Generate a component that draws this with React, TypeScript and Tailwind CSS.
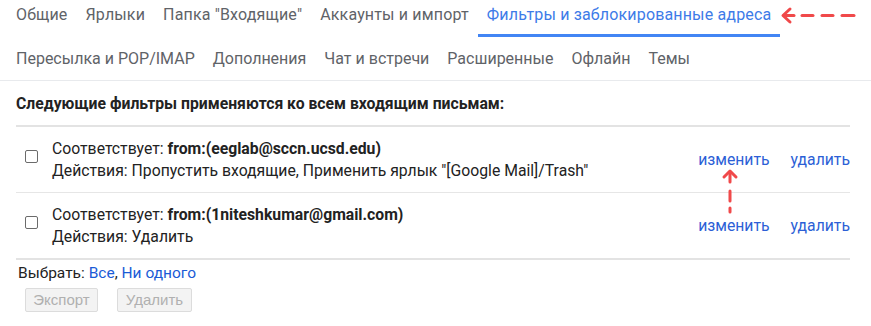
import React from "react";

const topTabs = [
  { label: "Общие" },
  { label: "Ярлыки" },
  { label: 'Папка "Входящие"' },
  { label: "Аккаунты и импорт" },
  { label: "Фильтры и заблокированные адреса", active: true },
];

const bottomTabs = ["Пересылка и POP/IMAP", "Дополнения", "Чат и встречи", "Расширенные", "Офлайн", "Темы"];

const filters = [
  { from: "from:(eeglab@sccn.ucsd.edu)", actions: 'Пропустить входящие, Применить ярлык "[Google Mail]/Trash"' },
  { from: "from:(1niteshkumar@gmail.com)", actions: "Удалить" },
];

function HArrow() {
  return (
    <svg className="absolute left-[778px] top-[6px]" width="84" height="20" viewBox="0 0 84 20">
      <g stroke="#f0494a" strokeWidth="3" strokeLinecap="round" fill="none">
        <path d="M12 3 L5 9.5 L12 16" strokeLinejoin="round" />
        <path d="M6 9.5 H16" />
        <path d="M24 9.5 H35" />
        <path d="M44 9.5 H55" />
        <path d="M64 9.5 H76" />
      </g>
    </svg>
  );
}

function VArrow() {
  return (
    <svg className="absolute left-[720px] top-[166px]" width="20" height="52" viewBox="0 0 20 52">
      <g stroke="#f0494a" strokeWidth="3" strokeLinecap="round" fill="none">
        <path d="M4 11 L10 5 L16 11" strokeLinejoin="round" />
        <path d="M10 6 V16" />
        <path d="M10 25 V35" />
        <path d="M10 42 V46" />
      </g>
    </svg>
  );
}

export default function App() {
  return (
    <div className="relative w-[871px] h-[326px] bg-white overflow-hidden" style={{ fontFamily: "Roboto, Arial, sans-serif" }}>
      <div className="border-b border-[#e8eaed]">
        <div className="flex pl-[7px] text-[16px] tracking-[0.16px] text-[#5f6368]">
          {topTabs.map((t) => (
            <div
              key={t.label}
              className={
                "h-[37px] pt-[5px] px-[9px] leading-[20px] whitespace-nowrap border-b-[3px] " +
                (t.active ? "border-[#4285f4] text-[#3d7be8]" : "border-transparent")
              }
            >
              {t.label}
            </div>
          ))}
        </div>
        <div className="flex pl-[7px] text-[16px] text-[#5f6368]">
          {bottomTabs.map((t) => (
            <div key={t} className="h-[43px] px-[9px] flex items-center whitespace-nowrap">
              {t}
            </div>
          ))}
        </div>
      </div>

      <div className="ml-4 w-[834px] text-[15.75px] text-[#222]">
        <div className="mt-[13px] pb-[11px] leading-[20px] font-bold border-b-2 border-[#e3e3e3]">
          Следующие фильтры применяются ко всем входящим письмам:
        </div>

        {filters.map((f, i) => (
          <div
            key={f.from}
            className={
              "flex items-center pt-[11px] pb-[10px] " +
              (i === filters.length - 1 ? "border-b-2 border-[#e3e3e3]" : "border-b border-[#e6e6e6]")
            }
          >
            <div className="w-[36px] self-stretch flex items-center pl-[9px] -mt-[7px]">
              <div className="w-[13px] h-[13px] rounded-[2px] border border-[#6b6b6b] bg-white" />
            </div>
            <div className="flex-1 leading-[22px]">
              <div>
                Соответствует: <span className="font-bold">{f.from}</span>
              </div>
              <div>Действия: {f.actions}</div>
            </div>
            <div className="flex gap-[21px] text-[#2c5fd6]">
              <span>изменить</span>
              <span>удалить</span>
            </div>
          </div>
        ))}

        <div className="mt-[3px] pl-[2px] leading-[20px] text-[15.5px]">
          Выбрать: <span className="text-[#1a5bd6]">Все</span>, <span className="text-[#1a5bd6]">Ни одного</span>
        </div>
        <div className="flex gap-[19px] ml-[9px] mt-[5px]" style={{ fontFamily: "'Liberation Sans', Arial, sans-serif" }}>
          <div className="h-[24px] w-[73px] flex items-center justify-center bg-[#f3f3f3] border border-[#dcdcdc] rounded-[2px] text-[15px] text-[#b0b0b0]">
            Экспорт
          </div>
          <div className="h-[24px] w-[75px] flex items-center justify-center bg-[#f3f3f3] border border-[#dcdcdc] rounded-[2px] text-[15px] text-[#b0b0b0]">
            Удалить
          </div>
        </div>
      </div>

      <HArrow />
      <VArrow />
    </div>
  );
}
